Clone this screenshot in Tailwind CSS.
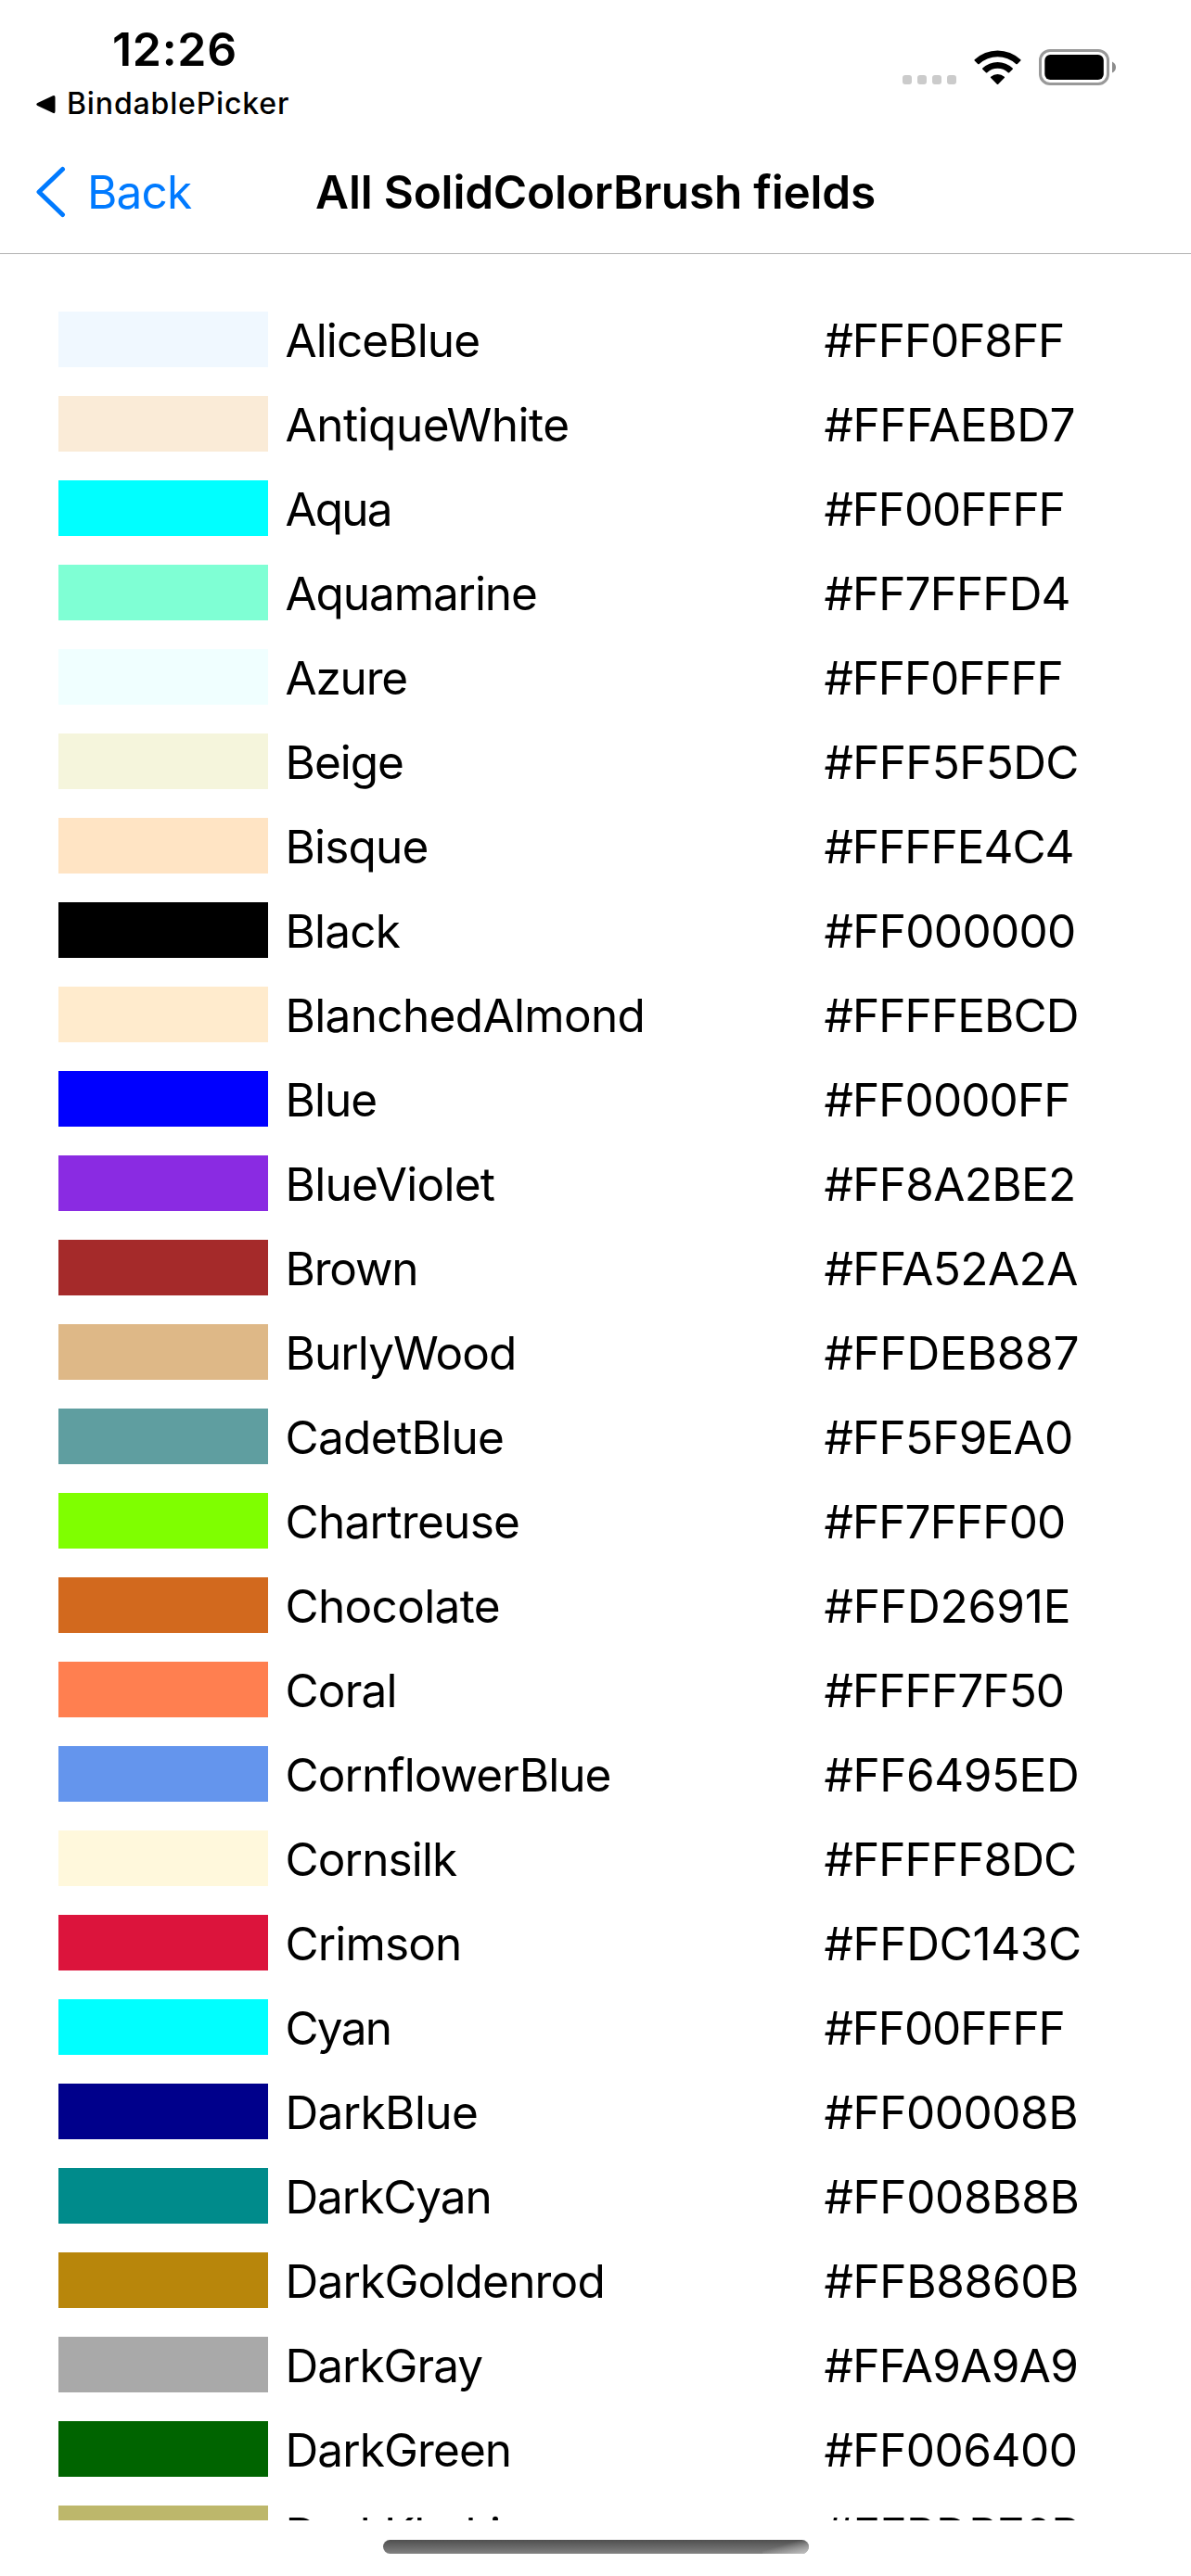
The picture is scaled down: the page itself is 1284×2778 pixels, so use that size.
<!DOCTYPE html>
<html lang="en">
<head>
<meta charset="utf-8">
<title>All SolidColorBrush fields</title>
<script src="https://cdn.jsdelivr.net/npm/@tailwindcss/browser@4"></script>
</head>
<body class="bg-white">
<div class="flex h-[2778px] w-[1284px] flex-col overflow-hidden bg-white font-['Inter',sans-serif] text-black">
  <header class="flex h-[274px] shrink-0 flex-col border-b border-[#b2b2b2]">
    <div class="flex h-[140px] justify-between pr-[81px] pl-[39px]">
      <div class="flex flex-col">
        <div class="mt-[23px] ml-[82px] h-[60px] text-[50px] leading-[60px] font-semibold tracking-[0.700px]">12:26</div>
        <div class="mt-[9px] flex h-10 items-center gap-[12px]">
          <svg class="h-[21px] w-[21px]" viewBox="0 0 21 21"><path d="M1.5 9 18 1.2Q20.5.2 20.5 3V18Q20.5 21 18 19.800L1.5 12Q-1 10.500 1.500 9Z"/></svg>
          <div class="text-[32px] leading-10 font-medium tracking-[0.850px]">BindablePicker</div>
        </div>
      </div>
      <div class="flex pt-[53px]">
        <div class="mt-[28px] flex gap-[6px]">
          <i class="size-[10px] rounded-[3px] bg-[#cbcbcb]"></i><i class="size-[10px] rounded-[3px] bg-[#cbcbcb]"></i><i class="size-[10px] rounded-[3px] bg-[#cbcbcb]"></i><i class="size-[10px] rounded-[3px] bg-[#cbcbcb]"></i>
        </div>
        <svg class="mt-px ml-[19px] h-[38px] w-[51px]" viewBox="0 0 51 38"><path d="M.7 10.300A36 36 0 0 1 50.300 10.300Q50.800 11 50.300 11.600L46.800 15Q46 15.500 45.300 15A29 29 0 0 0 5.700 15Q5 15.500 4.200 15L.7 11.600Q.2 11 .7 10.300ZM9.300 19.500A23.500 23.500 0 0 1 41.700 19.500Q42.200 20.100 41.700 20.700L38.100 24.200Q37.400 24.700 36.700 24.200A16.500 16.500 0 0 0 14.300 24.200Q13.600 24.700 12.900 24.200L9.300 20.700Q8.800 20.100 9.300 19.500ZM18.200 28.800A11 11 0 0 1 32.800 28.800Q33.400 29.400 32.800 30L26.200 36.800Q25.500 37.400 24.800 36.800L18.200 30Q17.600 29.400 18.200 28.800Z"/></svg>
        <svg class="ml-[19px] h-[39px] w-[83px]" viewBox="0 0 83 39"><rect x="1.500" y="1.500" width="73" height="36" rx="10.500" fill="none" stroke="#999" stroke-width="3"/><rect x="6.300" y="6" width="63.500" height="27" rx="6"/><path d="M79 13.500Q83 15.500 83 19.500T79 25.500Z" fill="#8c8c8c"/></svg>
      </div>
    </div>
    <div class="relative flex h-[133px] items-center justify-center">
      <div class="absolute top-0 left-[39px] flex h-full items-center gap-[23px] text-[#007aff]">
        <svg class="h-[56px] w-[32px]" viewBox="0 0 32 56"><path d="M28.500 3.500 3 28 28.500 52.500" fill="none" stroke="currentColor" stroke-width="5" stroke-linecap="round" stroke-linejoin="round"/></svg>
        <span class="text-[49.500px] leading-[60px] tracking-[-0.800px]">Back</span>
      </div>
      <h1 class="text-[49.500px] leading-[60px] font-semibold tracking-[-0.200px]">All SolidColorBrush fields</h1>
    </div>
  </header>
  <main id="list" class="flex h-[2444px] shrink-0 flex-col gap-[31px] overflow-hidden pt-[62px] pl-[63px]"></main>
  <footer class="flex h-[60px] justify-center pt-[21px]">
    <div class="flex h-[15px] w-[459px] justify-end overflow-hidden rounded-[8px] bg-linear-to-b from-[#4f4f4f] to-[#828282]">
      <div class="h-full w-[50px] bg-linear-to-br from-transparent from-40% to-[#c4c4c4]"></div>
    </div>
  </footer>
</div>
<script>
// name, hex value, letter spacing of the name, letter spacing of the value
const colors = [
  ["AliceBlue", "F0F8FF", -0.9, -1.1],
  ["AntiqueWhite", "FAEBD7", -0.5, -0.45],
  ["Aqua", "00FFFF", -1.8, -1.1],
  ["Aquamarine", "7FFFD4", -1.1, -0.9],
  ["Azure", "F0FFFF", -1.2, -1.1],
  ["Beige", "F5F5DC", -1, -0.67],
  ["Bisque", "FFE4C4", -0.8, -1],
  ["Black", "000000", -0.8, -0.67],
  ["BlanchedAlmond", "FFEBCD", -0.65, -0.9],
  ["Blue", "0000FF", -1, -0.9],
  ["BlueViolet", "8A2BE2", -0.7, -0.67],
  ["Brown", "A52A2A", -1.2, -0.55],
  ["BurlyWood", "DEB887", -0.9, -0.25],
  ["CadetBlue", "5F9EA0", -0.67, -0.78],
  ["Chartreuse", "7FFF00", -0.7, -0.9],
  ["Chocolate", "D2691E", -0.67, -0.12],
  ["Coral", "FF7F50", -0.8, -0.9],
  ["CornflowerBlue", "6495ED", -0.93, -0.45],
  ["Cornsilk", "FFF8DC", -0.87, -0.9],
  ["Crimson", "DC143C", -0.85, -0.35],
  ["Cyan", "00FFFF", -1.8, -1.1],
  ["DarkBlue", "00008B", -0.62, -0.45],
  ["DarkCyan", "008B8B", -1.1, -0.35],
  ["DarkGoldenrod", "B8860B", -0.8, -0.35],
  ["DarkGray", "A9A9A9", -1, -0.67],
  ["DarkGreen", "006400", -0.9, -0.5],
  ["DarkKhaki", "BDB76B", -0.9, -0.45]
];
document.getElementById("list").innerHTML = colors.map(([name, hex, nameSpacing, hexSpacing]) => `
  <div class="flex h-[60px] shrink-0 text-[49.500px] leading-[62px] whitespace-nowrap">
    <div class="h-[60px] w-[225.500px] shrink-0" style="background:#${hex}"></div>
    <div class="ml-[19px] w-[581px] shrink-0" style="letter-spacing:${nameSpacing}px">${name}</div>
    <div style="letter-spacing:${hexSpacing}px">#FF${hex}</div>
  </div>`).join("");
</script>
</body>
</html>
